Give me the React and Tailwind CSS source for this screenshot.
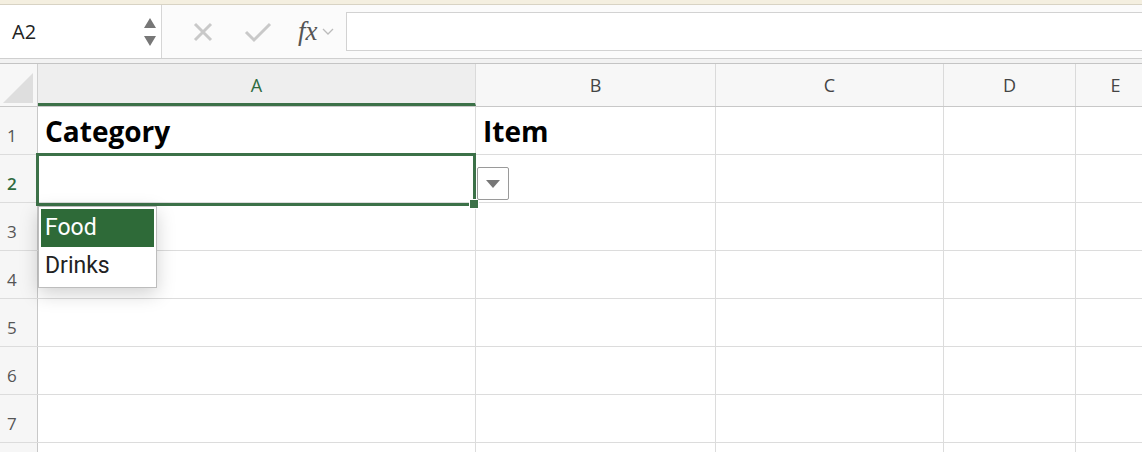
import React from 'react';

const cols = [
  { name: 'A', w: 438 },
  { name: 'B', w: 240 },
  { name: 'C', w: 228 },
  { name: 'D', w: 132 },
  { name: 'E', w: 80 },
];

const Row = ({ n, label = true, children }) => (
  <div className="flex h-[48px] border-b border-[#dcdcdc]">
    <div className={`w-[38px] shrink-0 border-r border-[#c8c8c8] bg-[#f6f6f6] flex items-end pb-[6px] pl-[7px] text-[17px] ${n === 2 ? 'text-[#2f6b3f] font-semibold' : 'text-[#555]'}`}>{label ? n : ''}</div>
    {cols.map((c, i) => (
      <div key={c.name} style={{ width: c.w }} className="shrink-0 border-r border-[#dcdcdc] relative">
        {children && children[i]}
      </div>
    ))}
  </div>
);

export default function App() {
  return (
    <div className="w-[1142px] h-[452px] overflow-hidden bg-white relative" style={{ fontFamily: '"Open Sans", "Liberation Sans", sans-serif' }}>
      <div className="h-[5px] bg-[#f4efe0] border-b border-[#d8d3c4]" />
      <div className="h-[54px] flex items-center bg-[#fbfbfb] border-b border-[#cfcfcf]">
        <div className="w-[162px] h-full bg-white border-r border-[#d6d6d6] flex items-center justify-between pl-[12px] pr-[4px]">
          <span className="text-[20px] text-[#222]">A2</span>
          <svg width="14" height="40" viewBox="0 0 14 40"><path d="M1 16 L7 6 L13 16Z M1 24 L7 34 L13 24Z" fill="#777" /></svg>
        </div>
        <div className="flex items-center gap-[30px] pl-[30px] pr-[12px]">
          <svg width="22" height="22" viewBox="0 0 22 22"><path d="M3 3 L19 19 M19 3 L3 19" stroke="#c9c9c9" strokeWidth="3" /></svg>
          <svg width="28" height="22" viewBox="0 0 28 22"><path d="M2 11 L10 19 L26 3" stroke="#c9c9c9" strokeWidth="3" fill="none" /></svg>
          <div className="flex items-center gap-[4px] -ml-[4px]">
            <span className="text-[27px] italic text-[#555]" style={{ fontFamily: '"Liberation Serif", serif' }}>fx</span>
            <svg width="12" height="8" viewBox="0 0 12 8"><path d="M1 1 L6 6 L11 1" stroke="#bbb" strokeWidth="1.3" fill="none" /></svg>
          </div>
        </div>
        <div className="flex-1 h-[39px] bg-white border border-[#d2d2d2] border-r-0" />
      </div>
      <div className="h-[5px] border-b border-[#c4c4c4] bg-[#f2f2f2]" />
      <div className="flex h-[43px] border-b border-[#c8c8c8] bg-[#f7f7f7]">
        <div className="w-[38px] shrink-0 border-r border-[#d0d0d0] relative">
          <svg className="absolute left-[3px] bottom-[3px]" width="30" height="30" viewBox="0 0 30 30"><path d="M30 0 L30 30 L0 30Z" fill="#dedede" /></svg>
        </div>
        {cols.map((c) => (
          <div key={c.name} style={{ width: c.w }} className={`shrink-0 border-r border-[#dadada] flex items-center justify-center text-[18px] ${c.name === 'A' ? 'text-[#2f6b3f] bg-[#eeeeee] border-b-[3px] border-b-[#3c7148] pt-[3px]' : 'text-[#444]'}`}>
            {c.name}
          </div>
        ))}
      </div>
      <Row n={1}>
        {[
          <span key="a" className="absolute left-[7px] bottom-[2px] text-[28px] font-bold text-black">Category</span>,
          <span key="b" className="absolute left-[7px] bottom-[2px] text-[28px] font-bold text-black">Item</span>,
        ]}
      </Row>
      <Row n={2} />
      <Row n={3} />
      <Row n={4} />
      <Row n={5} />
      <Row n={6} />
      <Row n={7} />
      <Row n={8} label={false} />

      {/* selected cell */}
      <div className="absolute left-[36px] top-[153px] w-[440px] h-[53px] border-[3px] border-[#3c7148]" />
      <div className="absolute left-[469px] top-[199px] w-[10px] h-[10px] bg-[#3c7148] border border-white" />
      <div className="absolute left-[477px] top-[167px] w-[32px] h-[33px] bg-white border border-[#9a9a9a] rounded-[2px] flex items-center justify-center">
        <svg width="16" height="10" viewBox="0 0 16 10"><path d="M1 1 L15 1 L8 9Z" fill="#777" /></svg>
      </div>

      {/* dropdown */}
      <div className="absolute left-[38px] top-[206px] w-[119px] bg-white border border-[#bdbdbd] p-[2px] shadow-[0_6px_18px_rgba(0,0,0,0.18)] text-[23px] leading-[37px]" style={{ fontFamily: 'Roboto, "Liberation Sans", sans-serif' }}>
        <div className="bg-[#2e6a38] text-white pl-[4px] h-[38px]">Food</div>
        <div className="text-[#222] pl-[4px] h-[38px]">Drinks</div>
      </div>
    </div>
  );
}
